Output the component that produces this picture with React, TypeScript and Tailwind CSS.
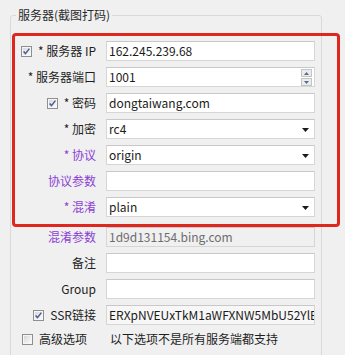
import React from "react"

type Row = {
  label: string
  purple?: boolean
  check?: boolean
  value?: string
  kind?: "text" | "spin" | "combo" | "disabled" | "ssr"
}

const rows: Row[] = [
  { label: "* 服务器 IP", check: true, value: "162.245.239.68" },
  { label: "* 服务器端口", value: "1001", kind: "spin" },
  { label: "* 密码", check: true, value: "dongtaiwang.com" },
  { label: "* 加密", value: "rc4", kind: "combo" },
  { label: "* 协议", purple: true, value: "origin", kind: "combo" },
  { label: "协议参数", purple: true, value: "" },
  { label: "* 混淆", purple: true, value: "plain", kind: "combo" },
  { label: "混淆参数", purple: true, value: "1d9d131154.bing.com", kind: "disabled" },
  { label: "备注", value: "" },
  { label: "Group", value: "" },
  { label: "SSR链接", check: true, value: "ERXpNVEUxTkM1aWFXNW5MbU52YlE", kind: "ssr" },
]

function CheckBox({ on }: { on: boolean }) {
  return (
    <svg width="11" height="11" viewBox="0 0 11 11" className="shrink-0">
      <defs>
        <linearGradient id="cbfill" x1="0" y1="0" x2="1" y2="1">
          <stop offset="0" stopColor="#d8d8d8" />
          <stop offset="1" stopColor="#fbfbfb" />
        </linearGradient>
      </defs>
      <rect x="0.5" y="0.5" width="10" height="10" fill="#f6f6f6" stroke="#8e8f8f" />
      <rect x="2" y="2" width="7" height="7" fill="url(#cbfill)" />
      {on && <path d="M2.6 5.4 L4.5 7.6 L8.4 2.6" stroke="#4a5c99" strokeWidth="1.5" fill="none" />}
    </svg>
  )
}

function Field({ row }: { row: Row }) {
  const kind = row.kind ?? "text"
  const bg = kind === "disabled" ? "bg-[#f0f0f0]" : kind === "ssr" ? "bg-[#f7f7f7]" : "bg-white"
  const color = kind === "disabled" ? "text-[#6d6d6d]" : "text-[#1b1b1b]"
  return (
    <div className={`relative flex h-[20px] items-center overflow-hidden border border-[#d6d6d6] border-t-[#c8c8c8] ${bg}`}>
      <span className={`whitespace-nowrap pl-[2px] ${color}`}>{row.value}</span>
      {kind === "combo" && (
        <svg width="7" height="4" viewBox="0 0 7 4" className="absolute right-[5px] top-[8px]">
          <path d="M0 0 H7 L3.5 4 Z" fill="#1a1a1a" />
        </svg>
      )}
      {kind === "spin" && (
        <div className="absolute right-[2px] top-[1px] flex flex-col gap-[1px]">
          <div className="flex h-[8px] w-[11px] items-center justify-center border border-[#c4c4c4] bg-[#ececec]">
            <svg width="5" height="3" viewBox="0 0 5 3"><path d="M0 3 H5 L2.5 0 Z" fill="#5a6b8c" /></svg>
          </div>
          <div className="flex h-[8px] w-[11px] items-center justify-center border border-[#c4c4c4] bg-[#ececec]">
            <svg width="5" height="3" viewBox="0 0 5 3"><path d="M0 0 H5 L2.5 3 Z" fill="#5a6b8c" /></svg>
          </div>
        </div>
      )}
    </div>
  )
}

export default function App() {
  return (
    <div className="relative h-[355px] w-[345px] overflow-hidden bg-[#f0f0f0] pl-[10px] pt-[15px] font-['Noto_Sans_CJK_SC','Noto_Sans',sans-serif] text-[12px] leading-none text-[#1e1e1e]">
      <div className="relative h-[400px] w-[312px] rounded-[3px] border border-[#d9d9d9] pt-[25px]">
        <span className="absolute -top-[8px] left-[5px] bg-[#f0f0f0] px-[2px] leading-[14px] text-[#2a2a2a]">
          服务器(截图打码)
        </span>

        <div className="grid grid-cols-[85px_209px] gap-x-[10px]">
          {rows.map((row, i) => (
            <React.Fragment key={row.label}>
              <div
                className={`flex h-[20px] items-center justify-end gap-[6px] ${
                  i === 7 ? "mt-[10px]" : i > 0 ? "mt-[6px]" : ""
                } ${row.purple ? "text-[#8b3fd3]" : ""}`}
              >
                {row.check && <CheckBox on />}
                <span className="whitespace-nowrap">{row.label}</span>
              </div>
              <div className={i === 7 ? "mt-[10px]" : i > 0 ? "mt-[6px]" : ""}>
                <Field row={row} />
              </div>
            </React.Fragment>
          ))}
          <div className="mt-[4px] flex h-[20px] items-center gap-[6px] pl-[11px]">
            <CheckBox on={false} />
            <span className="whitespace-nowrap">高级选项</span>
          </div>
          <div className="mt-[4px] flex h-[20px] items-center pl-[4px]">以下选项不是所有服务端都支持</div>
        </div>
      </div>

      <div className="pointer-events-none absolute left-[12px] top-[33px] h-[194px] w-[328px] rounded-[4px] border-[3px] border-[#e0271f]" />
    </div>
  )
}
